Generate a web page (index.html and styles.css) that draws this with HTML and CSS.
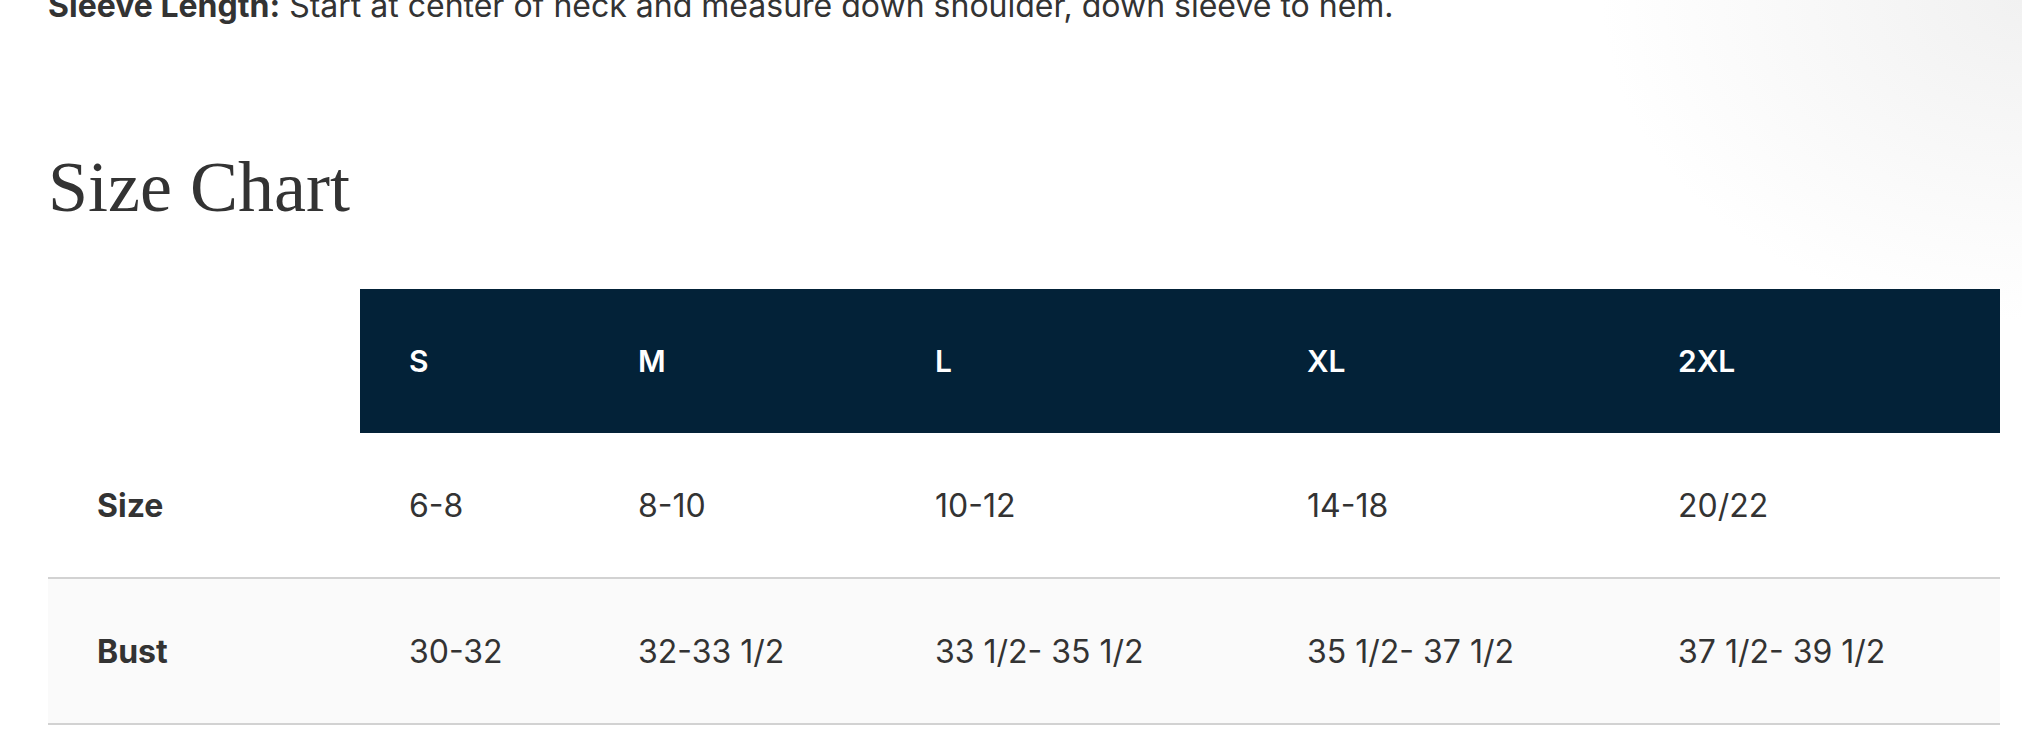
FILE: index.html
```html
<!DOCTYPE html>
<html lang="en">
<head>
<meta charset="utf-8">
<title>Size Chart</title>
<link rel="stylesheet" href="styles.css">
</head>
<body>
<div class="page">
  <p class="measure"><strong>Sleeve Length:</strong> Start at center of neck and measure down shoulder, down sleeve to hem.</p>
  <h2 class="title">Size Chart</h2>
  <table class="chart">
    <colgroup>
      <col class="c-label">
      <col class="c-s">
      <col class="c-m">
      <col class="c-l">
      <col class="c-xl">
      <col class="c-2xl">
    </colgroup>
    <thead>
      <tr>
        <th class="blank"></th>
        <th>S</th>
        <th>M</th>
        <th>L</th>
        <th>XL</th>
        <th>2XL</th>
      </tr>
    </thead>
    <tbody>
      <tr>
        <td class="label">Size</td>
        <td>6-8</td>
        <td>8-10</td>
        <td>10-12</td>
        <td>14-18</td>
        <td>20/22</td>
      </tr>
      <tr class="alt">
        <td class="label">Bust</td>
        <td>30-32</td>
        <td>32-33 1/2</td>
        <td>33 1/2- 35 1/2</td>
        <td>35 1/2- 37 1/2</td>
        <td>37 1/2- 39 1/2</td>
      </tr>
    </tbody>
  </table>
</div>
</body>
</html>
```
FILE: styles.css
```css
html, body {
  margin: 0;
  padding: 0;
  background: #ffffff;
}
body {
  overflow: hidden;
  height: 732px;
  background: radial-gradient(ellipse 420px 320px at 100% 0%, #f1f1f1 0%, rgba(255,255,255,0) 100%), #ffffff;
  font-family: Inter, "Liberation Sans", Arial, sans-serif;
  color: #333333;
}
.page {
  padding: 0 22px 0 48px;
}
.measure {
  margin: -18px 0 0 0;
  font-size: 32px;
  line-height: 48px;
  color: #333333;
  white-space: nowrap;
}
.measure strong {
  font-weight: 700;
}
.title {
  margin: 121px 0 0 0;
  font-family: "Liberation Serif", "Times New Roman", serif;
  font-weight: 400;
  font-size: 72px;
  line-height: 72px;
  color: #333333;
}
.chart {
  margin-top: 66px;
  width: 1952px;
  border-collapse: collapse;
  table-layout: fixed;
  font-size: 32px;
}
.c-label { width: 312px; }
.c-s { width: 229px; }
.c-m { width: 297px; }
.c-l { width: 372px; }
.c-xl { width: 371px; }
.c-2xl { width: 371px; }
.chart th {
  height: 144px;
  padding: 0 0 0 49px;
  text-align: left;
  background: #032238;
  color: #ffffff;
  font-size: 30px;
  font-weight: 600;
}
.chart th.blank {
  background: transparent;
}
.chart td {
  height: 144px;
  padding: 0 0 0 49px;
  vertical-align: middle;
  color: #333333;
  font-weight: 400;
}
.chart tbody tr {
  border-bottom: 2px solid #d2d2d2;
}
.chart td.label {
  font-weight: 700;
}
.chart tr.alt td {
  background: #fafafa;
}
```
